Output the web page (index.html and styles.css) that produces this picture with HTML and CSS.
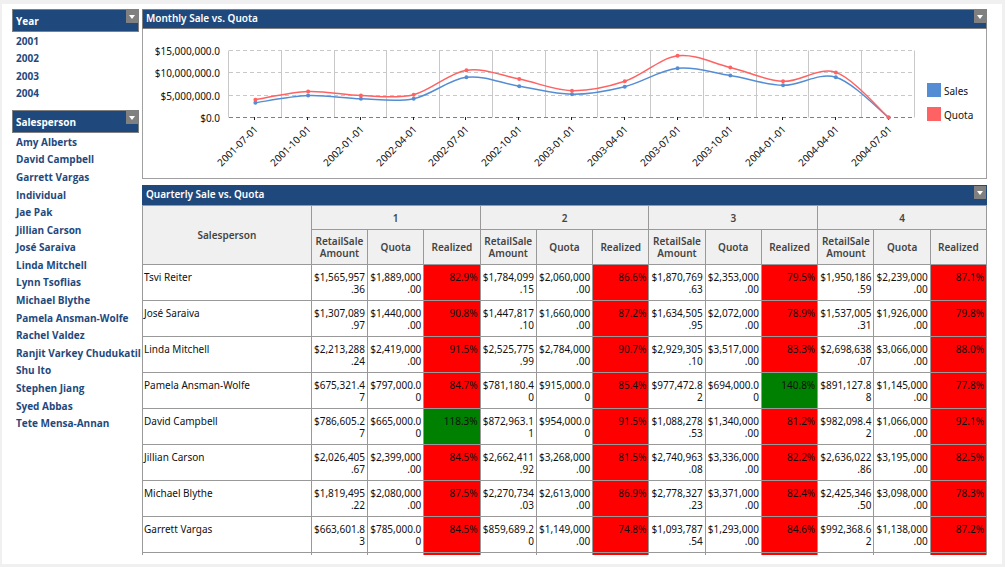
FILE: index.html
```html
<!DOCTYPE html>
<html lang="en">
<head>
<meta charset="utf-8">
<title>Sales dashboard</title>
<link rel="stylesheet" href="styles.css">
</head>
<body>
<div class="dashboard">
  <aside class="sidebar">
    <section class="filter">
      <header class="filter-head"><h2>Year</h2><button class="menu" type="button" aria-label="Year menu"></button></header>
      <ul class="filter-list years">
        <li><a href="#">2001</a></li><li><a href="#">2002</a></li><li><a href="#">2003</a></li><li><a href="#">2004</a></li>
      </ul>
    </section>
    <section class="filter">
      <header class="filter-head"><h2>Salesperson</h2><button class="menu" type="button" aria-label="Salesperson menu"></button></header>
      <ul class="filter-list people">
        <li><a href="#">Amy Alberts</a></li><li><a href="#">David Campbell</a></li><li><a href="#">Garrett Vargas</a></li><li><a href="#">Individual</a></li><li><a href="#">Jae Pak</a></li><li><a href="#">Jillian Carson</a></li><li><a href="#">José Saraiva</a></li><li><a href="#">Linda Mitchell</a></li><li><a href="#">Lynn Tsoflias</a></li><li><a href="#">Michael Blythe</a></li><li><a href="#">Pamela Ansman-Wolfe</a></li><li><a href="#">Rachel Valdez</a></li><li><a href="#">Ranjit Varkey Chudukatil</a></li><li><a href="#">Shu Ito</a></li><li><a href="#">Stephen Jiang</a></li><li><a href="#">Syed Abbas</a></li><li><a href="#">Tete Mensa-Annan</a></li>
      </ul>
    </section>
  </aside>
  <main class="content">
    <section class="panel">
      <header class="panel-head"><h2>Monthly Sale vs. Quota</h2><button class="menu" type="button" aria-label="Monthly menu"></button></header>
      <div class="chart-body"><svg class="chart" id="chart" viewBox="0 0 843 149" role="img" aria-label="Monthly Sale vs. Quota"></svg></div>
    </section>
    <section class="panel table-panel">
      <header class="panel-head"><h2>Quarterly Sale vs. Quota</h2><button class="menu" type="button" aria-label="Quarterly menu"></button></header>
      <div class="table-scroll">
        <table class="grid">
          <colgroup><col class="name-col"><col span="12"></colgroup>
          <thead>
            <tr class="quarters"><th rowspan="2">Salesperson</th><th colspan="3">1</th><th colspan="3">2</th><th colspan="3">3</th><th colspan="3">4</th></tr>
            <tr class="measures" id="measures"></tr>
          </thead>
          <tbody id="rows"></tbody>
        </table>
      </div>
    </section>
  </main>
</div>
<script src="app.js"></script>
</body>
</html>
```
FILE: styles.css
```css
* { box-sizing: border-box; }
body {
  margin: 0;
  height: 100vh;
  padding: 4px 3px 3px 2px;
  background: #f0f0f0;
  font-family: "Noto Sans", "Open Sans", sans-serif;
  font-size: 10px;
  color: #111;
  overflow: hidden;
}
.dashboard {
  display: flex;
  gap: 3px;
  height: 100%;
  padding: 5px 15px 9px 10px;
  background: #fff;
}
.sidebar { flex: none; width: 127px; display: flex; flex-direction: column; gap: 8px; }
h2 { margin: 0; font-size: 10px; line-height: 16px; font-weight: 600; color: #fff; }
.filter-head, .panel-head {
  display: flex;
  justify-content: space-between;
  align-items: flex-start;
  background: #1f497d;
  border: 1px solid #808080;
}
.filter-head { height: 23px; padding-left: 3px; }
.filter-head h2 { align-self: center; font-family: "Open Sans", sans-serif; font-weight: 700; }
.menu {
  display: flex;
  align-items: center;
  justify-content: center;
  width: 12px;
  height: 13px;
  padding: 0;
  border: 0;
  background: #808080;
}
.menu::before {
  content: "";
  border: 3px solid transparent;
  border-top: 4px solid #fff;
  border-bottom: 0;
}
.filter-list {
  display: grid;
  grid-auto-rows: 1fr;
  margin: 0;
  padding: 0 0 0 4px;
  list-style: none;
}
.years { height: 70px; }
.people { height: 299px; }
.filter-list li { display: flex; align-items: center; white-space: nowrap; }
.filter-list a { color: #1f497d; font-family: "Open Sans", sans-serif; font-weight: 700; text-decoration: none; }
.content { flex: 1; min-width: 0; display: flex; flex-direction: column; gap: 6px; }
.panel-head { height: 20px; padding-left: 3px; }
.chart-body { border: 1px solid #a0a0a0; border-top: 0; }
.chart { display: block; width: 100%; height: auto; }
.chart text { font-size: 10px; fill: #111; }
.axis-label { text-anchor: end; }
.grid-line { stroke: #c8c8c8; }
.dash { stroke: #c8c8c8; stroke-dasharray: 4 3; }
.base { stroke: #808080; }
.tick { stroke: #222; }
.series { fill: none; stroke-width: 1.5; }
.sales { stroke: #548dd4; }
.quota { stroke: #ff6262; }
.sales-fill { fill: #548dd4; }
.quota-fill { fill: #ff6262; }
.table-panel { flex: 1; min-height: 0; display: flex; flex-direction: column; }
.table-panel .panel-head { flex: none; border-color: #1f497d; }
.table-scroll { flex: 1; min-height: 0; overflow: hidden; }
.grid { width: 100%; table-layout: fixed; border-collapse: collapse; }
.name-col { width: 20%; }
.grid th, .grid td { border: 1px solid #999; line-height: 12px; }
.grid th { padding: 0; background: #f0f0f0; color: #444; font-size: 10px; font-weight: 600; }
.quarters { height: 24px; }
.measures { height: 35px; }
.grid td, .grid .name {
  height: 36px;
  padding: 6px 2px 5px 1px;
  vertical-align: top;
  text-align: right;
  font-size: 10px;
  overflow-wrap: anywhere;
}
.grid .name { background: #fff; color: #111; text-align: left; font-weight: 400; }
.grid .below { background: #f00; }
.grid .above { background: #008000; }
```
FILE: app.js
```js
const rows = [
  ["Tsvi Reiter", "1,565,957.36 1,889,000.00 82.9 1,784,099.15 2,060,000.00 86.6 1,870,769.63 2,353,000.00 79.5 1,950,186.59 2,239,000.00 87.1"],
  ["José Saraiva", "1,307,089.97 1,440,000.00 90.8 1,447,817.10 1,660,000.00 87.2 1,634,505.95 2,072,000.00 78.9 1,537,005.31 1,926,000.00 79.8"],
  ["Linda Mitchell", "2,213,288.24 2,419,000.00 91.5 2,525,775.99 2,784,000.00 90.7 2,929,305.10 3,517,000.00 83.3 2,698,638.07 3,066,000.00 88.0"],
  ["Pamela Ansman-Wolfe", "675,321.47 797,000.00 84.7 781,180.40 915,000.00 85.4 977,472.82 694,000.00 140.8 891,127.88 1,145,000.00 77.8"],
  ["David Campbell", "786,605.27 665,000.00 118.3 872,963.11 954,000.00 91.5 1,088,278.53 1,340,000.00 81.2 982,098.42 1,066,000.00 92.1"],
  ["Jillian Carson", "2,026,405.67 2,399,000.00 84.5 2,662,411.92 3,268,000.00 81.5 2,740,963.08 3,336,000.00 82.2 2,636,022.86 3,195,000.00 82.5"],
  ["Michael Blythe", "1,819,495.22 2,080,000.00 87.5 2,270,734.03 2,613,000.00 86.9 2,778,327.23 3,371,000.00 82.4 2,425,346.50 3,098,000.00 78.3"],
  ["Garrett Vargas", "663,601.83 785,000.00 84.5 859,689.20 1,149,000.00 74.8 1,093,787.54 1,293,000.00 84.6 992,368.62 1,138,000.00 87.2"],
  ["", "  0   0   0   0"]
];

document.getElementById("measures").innerHTML =
  "<th>RetailSale Amount</th><th>Quota</th><th>Realized</th>".repeat(4);

document.getElementById("rows").innerHTML = rows.map(([name, values]) => {
  const cells = values.split(" ").map((v, i) => {
    if (i % 3 < 2) return `<td>${v && "$" + v}</td>`;
    const state = parseFloat(v) >= 100 ? "above" : "below";
    return `<td class="${state}">${v === "0" ? "" : v + "%"}</td>`;
  }).join("");
  return `<tr><th class="name" scope="row">${name}</th>${cells}</tr>`;
}).join("");

const dates = ["2001-07-01", "2001-10-01", "2002-01-01", "2002-04-01", "2002-07-01", "2002-10-01", "2003-01-01", "2003-04-01", "2003-07-01", "2003-10-01", "2004-01-01", "2004-04-01", "2004-07-01"];
const millions = {
  sales: [3.3, 4.9, 4.2, 4.2, 9, 7, 5.2, 6.9, 11, 9.4, 7.2, 9, 0],
  quota: [4, 5.8, 4.9, 5.1, 10.6, 8.6, 6, 8.1, 13.8, 11.2, 8.1, 10.1, 0]
};
const left = 86, right = 772, top0 = 21.5, bottom = 88.5;
const step = (right - left) / dates.length;
const px = i => left + step * (i + 0.5);
const py = v => bottom - v * (bottom - top0) / 15;

// Catmull-Rom spline through the points, as cubic segments
function spline(values) {
  const p = values.map((v, i) => [px(i), py(v)]);
  let d = `M${p[0]}`;
  for (let i = 0; i < p.length - 1; i++) {
    const a = p[Math.max(i - 1, 0)], b = p[i], c = p[i + 1], e = p[Math.min(i + 2, p.length - 1)];
    d += `C${b[0] + (c[0] - a[0]) / 6},${b[1] + (c[1] - a[1]) / 6} ${c[0] - (e[0] - b[0]) / 6},${c[1] - (e[1] - b[1]) / 6} ${c}`;
  }
  return d;
}

let svg = "";
for (let i = 0; i <= dates.length; i++) {
  const x = Math.round(left + step * i) - 0.5;
  svg += `<line class="grid-line" x1="${x}" x2="${x}" y1="${top0}" y2="${bottom}"/>`;
}
["$0.0", "$5,000,000.0", "$10,000,000.0", "$15,000,000.0"].forEach((label, i) => {
  const y = Math.floor(py(i * 5)) + 0.5;
  svg += `<line class="dash${i ? "" : " base"}" x1="${left}" x2="${right}" y1="${y}" y2="${y}"/>`;
  svg += `<text class="axis-label" x="77" y="${y + 4}">${label}</text>`;
});
dates.forEach((date, i) => {
  const x = Math.round(px(i)) - 0.5;
  svg += `<line class="tick" x1="${x}" x2="${x}" y1="88" y2="91"/>`;
  svg += `<text class="axis-label" transform="translate(${x + 4} 101) rotate(-45)">${date}</text>`;
});
for (const [name, values] of Object.entries(millions)) {
  svg += `<path class="series ${name}" d="${spline(values)}"/>`;
  values.forEach((v, i) => { svg += `<circle class="${name}-fill" cx="${px(i)}" cy="${py(v)}" r="2"/>`; });
}
svg += `<rect class="sales-fill" x="784" y="54" width="14" height="14"/><text x="801" y="66">Sales</text>`;
svg += `<rect class="quota-fill" x="784" y="78" width="14" height="14"/><text x="801" y="90">Quota</text>`;
document.getElementById("chart").innerHTML = svg;
```
